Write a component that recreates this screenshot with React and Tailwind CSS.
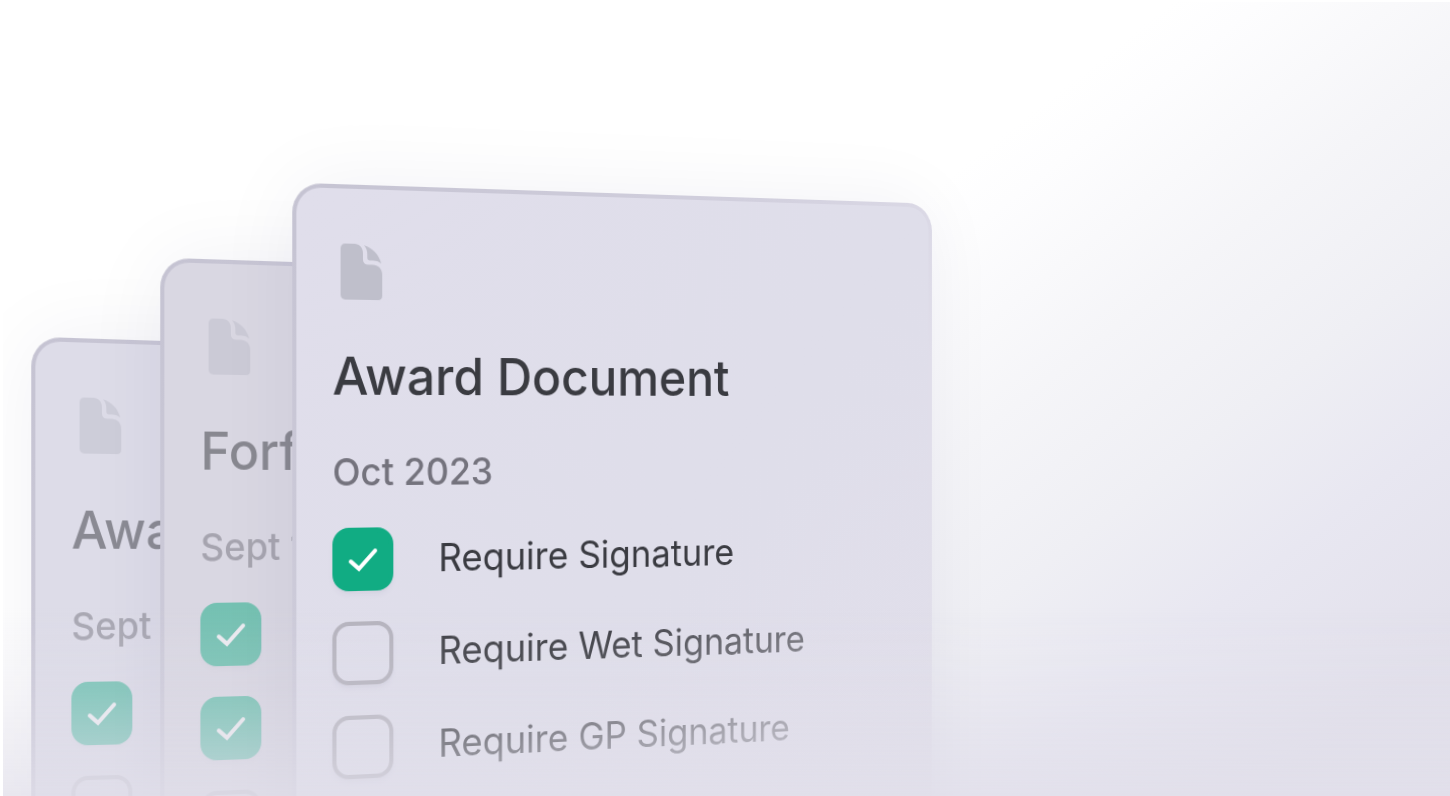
const cards = [
  {
    title: 'Awar',
    date: 'Sept',
    position: 'left-[16px] top-[349px]',
    surface: 'bg-[#dddce8]',
    content: 'opacity-50',
    front: false,
    options: [
      { label: 'Require Signature', checked: true },
      { label: 'Require Wet Signature', checked: false },
    ],
  },
  {
    title: 'Forf',
    date: 'Sept 1',
    position: 'left-[145px] top-[270px]',
    surface: 'bg-[#d9d7e2]',
    content: 'opacity-50',
    front: false,
    options: [
      { label: 'Require Signature', checked: true },
      { label: 'Require Wet Signature', checked: true },
      { label: 'Require GP Signature', checked: false },
    ],
  },
  {
    title: 'Award Document',
    date: 'Oct 2023',
    position: 'left-[277px] top-[195px]',
    surface: 'bg-linear-to-br from-[#e0deeb] via-[#dfdeea] to-[#e1dfeb]',
    content: '',
    front: true,
    options: [
      { label: 'Require Signature', checked: true },
      { label: 'Require Wet Signature', checked: false },
      { label: 'Require GP Signature', checked: false },
    ],
  },
]

function DocumentIcon() {
  return (
    <svg viewBox="0 0 125 168" className="ml-2 h-[53px] w-[41px]" preserveAspectRatio="none" fill="#bfbfcb" aria-hidden="true">
      <path d="M14 0H42C57 0 67 12 67 27V47C67 57 73 62 82 62H96C113 62 125 74 125 91V156C125 163 120 168 113 168H14C6 168 0 162 0 154V14C0 6 6 0 14 0Z" />
      <path d="M70 4C96 11 116 32 122 58C114 51 106 49 98 49H88C82 49 80 46 80 40V30C80 20 77 11 70 4Z" />
    </svg>
  )
}

function Option({ id, label, checked, showLabel }) {
  return (
    <li className="flex items-center gap-[45px]">
      <span className="relative h-[60px] w-[60px] shrink-0">
        <input
          id={id} type="checkbox" defaultChecked={checked} aria-label={label}
          className="peer block h-[60px] w-[60px] appearance-none rounded-2xl border-4 border-[#b5b3bd] shadow-md shadow-[#3a3a60]/5 checked:border-[#11ac83] checked:bg-[#11ac83]"
        />
        <svg viewBox="0 0 60 60" className="pointer-events-none absolute inset-0 hidden peer-checked:block" fill="none" aria-hidden="true">
          <path d="M18 32L26 39L42 22" stroke="#fff" strokeWidth="4" strokeLinecap="round" strokeLinejoin="miter" />
        </svg>
      </span>
      {showLabel && (
        <label htmlFor={id} className="text-[37px] leading-[44px] whitespace-nowrap text-[#3a3b41]">{label}</label>
      )}
    </li>
  )
}

function Card({ card, index }) {
  return (
    <section
      className={`absolute w-[678px] origin-[449px_222px] rounded-[28px] bg-linear-125 from-[#c5c3d2] via-[#d2d0de] via-40% to-[#e0deea] to-65% p-1 shadow-[0_0_80px_rgba(40,40,80,0.06)] [transform:perspective(3000px)_rotateY(24deg)] ${card.position}`}
    >
      <div className={`min-h-[760px] rounded-3xl px-[35px] pt-[52px] ${card.surface}`}>
        <div className={card.content}>
          <DocumentIcon />
          <h2 className="mt-[42px] text-[50px] leading-[60px] font-medium whitespace-nowrap text-[#3a3b41]">{card.title}</h2>
          <p className="mt-[39px] text-[36px] leading-[44px] font-medium text-[#74737d]">{card.date}</p>
          <ul className="mt-[31px] flex flex-col gap-[29px]">
            {card.options.map((option, i) => (
              <Option key={option.label} id={`card-${index}-option-${i}`} showLabel={card.front} {...option} />
            ))}
          </ul>
        </div>
      </div>

      {/* Fades the lower right corner into the background */}
      {card.front && (
        <div className="pointer-events-none absolute inset-0 rounded-[28px] bg-[linear-gradient(148deg,transparent_540px,#e1dfea66_680px,#e1dfea99_750px,#e1dfeacc_850px)]" />
      )}
    </section>
  )
}

function App() {
  return (
    <div className="min-h-screen bg-white pt-[2px] pl-[3px] font-['Inter','Liberation_Sans',sans-serif]">
      <main className="relative h-[calc(100vh-2px)] overflow-hidden bg-[linear-gradient(142deg,#fff_720px,#fdfdfe_775px,#f5f5f8_940px,#efeff4_1085px,#e8e7f1_1225px,#e2e0eb_1400px)]">
        {cards.map((card, i) => (
          <Card key={i} card={card} index={i} />
        ))}

        {/* Bottom fade */}
        <div className="pointer-events-none absolute inset-x-0 bottom-0 h-48 bg-[linear-gradient(to_bottom,transparent,#e1dfea33_86px,#e1dfea80_151px,#e1dfeab8_192px)]" />
      </main>
    </div>
  )
}

export default App
